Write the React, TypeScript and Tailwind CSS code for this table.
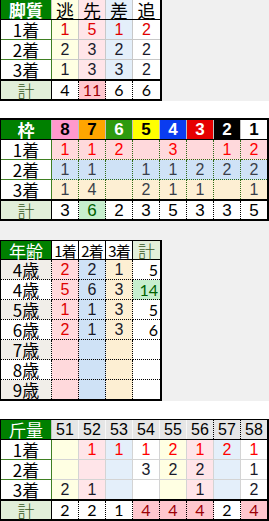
import type { ReactNode } from "react";

const JP = "font-['Noto_Sans_CJK_JP','Noto_Sans_CJK_SC',sans-serif]";
const NUM = "font-['Liberation_Sans','Noto_Sans_CJK_JP',sans-serif]";
const THIN = "font-['Lato','Liberation_Sans',sans-serif] font-normal";

function Cell({ cls, children }: { cls: string; children?: ReactNode }) {
  return <div className={`flex items-center justify-center leading-none ${cls}`}>{children}</div>;
}

// 脚質
const ashiCols = [
  { h: "逃", bg: "bg-[#ffffe3]" },
  { h: "先", bg: "bg-[#ffe5e9]" },
  { h: "差", bg: "bg-[#e4effa]" },
  { h: "追", bg: "bg-white" },
];
const ashiRows = [
  ["1", "5", "1", "2"],
  ["2", "3", "2", "2"],
  ["1", "3", "3", "2"],
];
const ashiTotal = ["4", "11", "6", "6"];

// 枠
const waku = [
  { n: "8", bg: "bg-[#ff99cc] text-black" },
  { n: "7", bg: "bg-[#ffa500] text-black" },
  { n: "6", bg: "bg-[#2e9a0e] text-white" },
  { n: "5", bg: "bg-[#ffff00] text-black" },
  { n: "4", bg: "bg-[#0a3cf0] text-white" },
  { n: "3", bg: "bg-[#e60000] text-white" },
  { n: "2", bg: "bg-black text-white" },
  { n: "1", bg: "bg-white text-black" },
];
const wakuRows = [
  { bg: "bg-[#ffd9dc]", v: ["1", "1", "2", "", "3", "", "1", "2"] },
  { bg: "bg-[#cfe2f6]", v: ["1", "1", "", "1", "1", "2", "2", "2"] },
  { bg: "bg-[#fdefd3]", v: ["1", "4", "", "2", "1", "1", "", "1"] },
];
const wakuTotal = ["3", "6", "2", "3", "5", "3", "3", "5"];

// 年齢
const ageCols = ["bg-[#ffd9dc]", "bg-[#cfe2f6]", "bg-[#fdefd3]"];
const ageRows = [
  { l: "4歳", v: ["2", "2", "1"], t: "5" },
  { l: "4歳", v: ["5", "6", "3"], t: "14" },
  { l: "5歳", v: ["1", "1", "3"], t: "5" },
  { l: "6歳", v: ["2", "1", "3"], t: "6" },
  { l: "7歳", v: ["", "", ""], t: "" },
  { l: "8歳", v: ["", "", ""], t: "" },
  { l: "9歳", v: ["", "", ""], t: "" },
];

// 斤量
const kinCols = [
  { h: "51", bg: "bg-[#ffffe3]" },
  { h: "52", bg: "bg-[#ffe5e9]" },
  { h: "53", bg: "bg-[#e4effa]" },
  { h: "54", bg: "bg-white" },
  { h: "55", bg: "bg-[#ffffe3]" },
  { h: "56", bg: "bg-[#ffe5e9]" },
  { h: "57", bg: "bg-[#e4effa]" },
  { h: "58", bg: "bg-white" },
];
const kinRows = [
  ["", "1", "1", "1", "2", "1", "2", "1"],
  ["", "", "", "3", "2", "2", "", "1"],
  ["2", "1", "", "", "", "1", "", "2"],
];
const kinTotal = ["2", "2", "1", "4", "4", "4", "2", "4"];

const labelHead = `w-[51px] bg-[#008000] text-white text-[17px] ${JP}`;
const labelTotal = `w-[51px] bg-[#e2efda] text-[#375623] text-[17px] border-r border-black ${JP} font-light`;

function Ashi() {
  return (
    <div className="flex h-[101px] bg-[#f0f0f0]">
      <div className="w-[162px] flex flex-col bg-white border-l border-r-2 border-b-2 border-black">
        <div className="flex h-[20px] border-b border-black">
          <Cell cls={`${labelHead} font-bold border-r border-[#c0c0c0]`}>脚質</Cell>
          {ashiCols.map((c, i) => (
            <Cell key={i} cls={`w-[27px] ${c.bg} text-[18px] ${JP} ${i < 3 ? "border-r border-[#c8c8c8]" : ""}`}>
              {c.h}
            </Cell>
          ))}
        </div>
        {ashiRows.map((r, ri) => (
          <div key={ri} className={`flex ${ri < 2 ? "h-[20px]" : "h-[19px]"}`}>
            <Cell cls={`w-[51px] text-[17px] ${JP} border-r border-[#3f7f22] ${ri < 2 ? "border-b" : ""}`}>
              {ri + 1}着
            </Cell>
            {r.map((v, i) => (
              <Cell
                key={i}
                cls={`w-[27px] ${ashiCols[i].bg} text-[16px] ${NUM} ${ri === 0 ? "text-[#e00000]" : "text-[#1a1a2a]"} ${
                  i < 3 ? "border-r" : ""
                } ${ri < 2 ? "border-b" : ""} border-[#c8c8c8]`}
              >
                {v}
              </Cell>
            ))}
          </div>
        ))}
        <div className="flex h-[20px] border-t-2 border-black">
          <Cell cls={labelTotal}>計</Cell>
          {ashiTotal.map((v, i) => (
            <Cell
              key={i}
              cls={`w-[27px] text-[16px] ${THIN} ${
                i === 1 ? "bg-[#ffc7ce] text-[#9c0006]" : "bg-white text-black"
              } ${i < 3 ? "border-r border-dotted border-black" : ""}`}
            >
              {v}
            </Cell>
          ))}
        </div>
      </div>
    </div>
  );
}

function Waku() {
  return (
    <div className="w-full flex flex-col bg-white border-t-2 border-l border-r-2 border-b-2 border-black">
      <div className="flex h-[20px] border-b border-black">
        <Cell cls={`${labelHead} font-bold border-r border-[#c0c0c0]`}>枠</Cell>
        {waku.map((c, i) => (
          <Cell
            key={i}
            cls={`${i < 7 ? "w-[27px] border-r border-[#c0c0c0]" : "w-[26px]"} ${c.bg} text-[17px] font-bold ${NUM}`}
          >
            {c.n}
          </Cell>
        ))}
      </div>
      {wakuRows.map((r, ri) => (
        <div key={ri} className={`flex ${ri < 2 ? "h-[20px]" : "h-[19px]"}`}>
          <Cell cls={`w-[51px] bg-white text-[17px] ${JP} border-r border-[#3f7f22] ${ri < 2 ? "border-b" : ""}`}>
            {ri + 1}着
          </Cell>
          {r.v.map((v, i) => (
            <Cell
              key={i}
              cls={`${i < 7 ? "w-[27px] border-r" : "w-[26px]"} ${r.bg} text-[16px] ${NUM} ${
                ri === 0 ? "text-[#ff0000]" : "text-[#3a3f4a]"
              } ${ri < 2 ? "border-b" : ""} border-dotted border-[#2d6a14]`}
            >
              {v}
            </Cell>
          ))}
        </div>
      ))}
      <div className="flex h-[20px] border-t-2 border-black">
        <Cell cls={labelTotal}>計</Cell>
        {wakuTotal.map((v, i) => (
          <Cell
            key={i}
            cls={`${i < 7 ? "w-[27px] border-r border-dotted border-black" : "w-[26px]"} text-[17px] ${NUM} ${
              i === 1 ? "bg-[#c6efce] text-[#006100]" : "bg-white text-black"
            }`}
          >
            {v}
          </Cell>
        ))}
      </div>
    </div>
  );
}

function Age() {
  return (
    <div className="w-[162px] flex flex-col bg-white border-t border-l border-r-2 border-b-2 border-black">
      <div className="flex h-[19px] border-b border-black">
        <Cell cls={`${labelHead} border-r border-black`}>年齢</Cell>
        {["1着", "2着", "3着"].map((h, i) => (
          <Cell key={i} cls={`w-[27px] bg-white text-[15px] tracking-[-1px] ${JP} border-r border-black`}>
            {h}
          </Cell>
        ))}
        <Cell cls={`w-[27px] bg-[#e2efda] text-[#375623] text-[17px] ${JP} font-light`}>計</Cell>
      </div>
      {ageRows.map((r, ri) => (
        <div key={ri} className={`flex ${ri < 6 ? "h-[20px]" : "h-[19px]"}`}>
          <Cell
            cls={`w-[51px] ${ri % 2 === 0 ? "bg-[#f1eee9]" : "bg-white"} text-[17px] ${JP} border-r border-dotted border-black ${
              ri < 6 ? "border-b" : ""
            }`}
          >
            {r.l}
          </Cell>
          {r.v.map((v, i) => (
            <Cell
              key={i}
              cls={`w-[27px] ${ageCols[i]} text-[16px] ${NUM} ${i === 0 ? "text-[#e00000]" : "text-[#1a1a2a]"} border-r border-dotted border-black ${
                ri < 6 ? "border-b" : ""
              }`}
            >
              {v}
            </Cell>
          ))}
          <div
            className={`w-[27px] flex items-center justify-end pr-[2px] leading-none text-[16px] ${THIN} ${
              r.t === "14" ? "bg-[#c6efce] text-[#006100]" : "bg-white text-black"
            } ${ri < 6 ? "border-b border-dotted border-black" : ""}`}
          >
            {r.t}
          </div>
        </div>
      ))}
    </div>
  );
}

function Kin() {
  return (
    <div className="w-full flex flex-col bg-white border-t border-l border-r-2 border-b-2 border-black">
      <div className="flex h-[20px] border-b border-black">
        <Cell cls={`${labelHead} border-r border-[#c0c0c0]`}>斤量</Cell>
        {kinCols.map((c, i) => (
          <Cell
            key={i}
            cls={`${i < 7 ? "w-[27px] border-r" : "w-[26px]"} ${
              i === 5 || i === 6 ? "border-dotted border-black" : "border-[#f7f7f7]"
            } bg-[#e6e6e6] text-[16px] ${NUM} text-black`}
          >
            {c.h}
          </Cell>
        ))}
      </div>
      {kinRows.map((r, ri) => (
        <div key={ri} className={`flex ${ri < 2 ? "h-[20px]" : "h-[19px]"}`}>
          <Cell cls={`w-[51px] bg-white text-[17px] ${JP} border-r border-[#3f7f22] ${ri < 2 ? "border-b" : ""}`}>
            {ri + 1}着
          </Cell>
          {r.map((v, i) => (
            <Cell
              key={i}
              cls={`${i < 7 ? "w-[27px] border-r" : "w-[26px]"} ${kinCols[i].bg} text-[16px] ${NUM} ${
                ri === 0 ? "text-[#ff0000]" : "text-[#1a1a2a]"
              } ${ri < 2 ? "border-b" : ""} border-[#d4d4d4]`}
            >
              {v}
            </Cell>
          ))}
        </div>
      ))}
      <div className="flex h-[20px] border-t-2 border-black">
        <Cell cls={labelTotal}>計</Cell>
        {kinTotal.map((v, i) => (
          <Cell
            key={i}
            cls={`${i < 7 ? "w-[27px] border-r border-dotted border-black" : "w-[26px]"} text-[16px] ${THIN} ${
              v === "4" ? "bg-[#ffc7ce] text-[#9c0006]" : "bg-white text-black"
            }`}
          >
            {v}
          </Cell>
        ))}
      </div>
    </div>
  );
}

export default function App() {
  return (
    <div className="w-[269px] h-[521px] bg-white flex flex-col overflow-hidden">
      <Ashi />
      <div className="h-[17px]" />
      <div className="flex flex-col bg-[#f0f0f0]">
        <Waku />
        <div className="h-[19px]" />
        <Age />
      </div>
      <div className="h-[18px]" />
      <Kin />
    </div>
  );
}
